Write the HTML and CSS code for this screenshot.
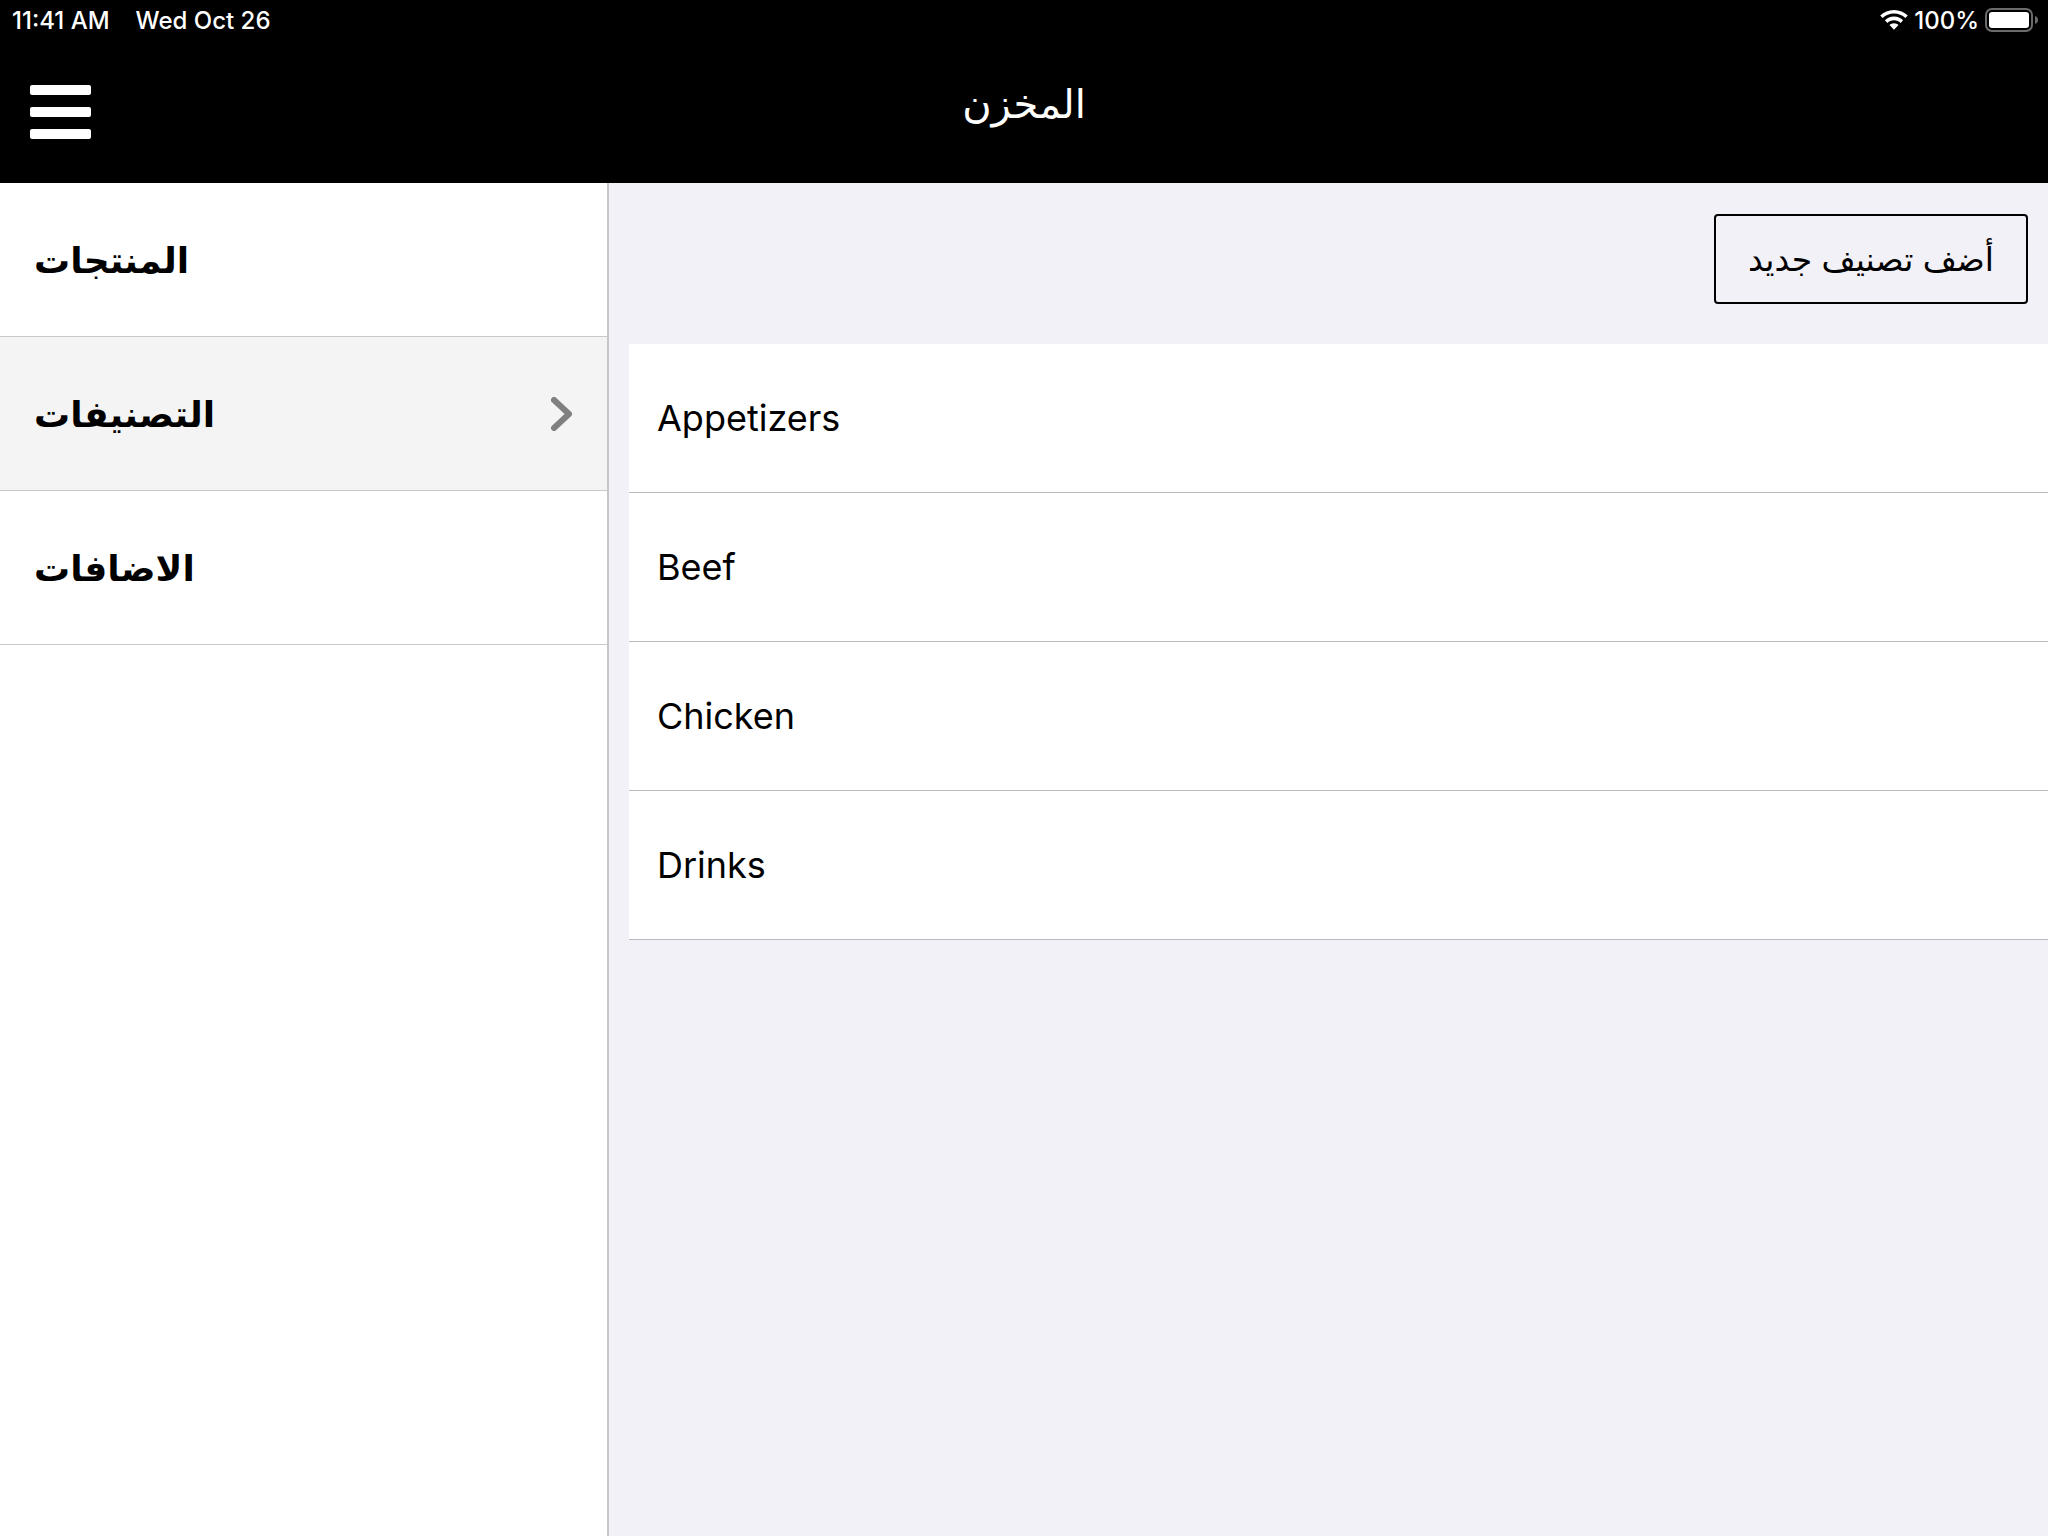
FILE: index.html
```html
<!DOCTYPE html>
<html lang="ar">
<head>
    <meta charset="UTF-8">
    <meta name="viewport" content="width=device-width, initial-scale=1.0">
    <title>المخزن</title>
    <link rel="stylesheet" href="styles.css">
</head>
<body>
    <header class="header">
        <div class="status-bar">
            <div class="status-group status-left">
                <span>11:41 AM</span>
                <span lang="en">Wed Oct 26</span>
            </div>
            <div class="status-group">
                <svg class="wifi" width="28" height="20" viewBox="0 0 28 20" aria-hidden="true">
                    <path d="M14 0C8.600 0 3.700 2.100 0.200 5.500L2.700 8.100C5.600 5.300 9.600 3.600 14 3.600s8.400 1.700 11.300 4.500l2.500-2.600C24.300 2.100 19.400 0 14 0z"/>
                    <path d="M14 6.600c-3.600 0-6.800 1.400-9.100 3.700l2.500 2.600c1.700-1.700 4-2.700 6.600-2.700s4.900 1 6.600 2.700l2.500-2.600C20.800 8 17.600 6.600 14 6.600z"/>
                    <path d="M14 13.200c-1.800 0-3.300 0.700-4.500 1.800L14 19.700l4.500-4.700c-1.200-1.100-2.700-1.800-4.500-1.800z"/>
                </svg>
                <span>100%</span>
                <svg class="battery" width="54" height="24" viewBox="0 0 54 24" aria-hidden="true">
                    <rect x="1" y="1" width="46" height="22" rx="6" fill="none" stroke="#6b6b6b" stroke-width="2"/>
                    <rect x="4" y="4" width="40" height="16" rx="3" fill="#fff"/>
                    <path d="M50 8c2 0.600 3 2.200 3 4s-1 3.400-3 4z" fill="#6b6b6b"/>
                </svg>
            </div>
        </div>
        <div class="nav-bar">
            <button class="menu-button" type="button" aria-label="القائمة">
                <span class="menu-line"></span>
                <span class="menu-line"></span>
                <span class="menu-line"></span>
            </button>
            <h1 class="title">المخزن</h1>
        </div>
    </header>

    <div class="content">
        <nav class="sidebar">
            <a class="sidebar-item" href="#products">المنتجات</a>
            <a class="sidebar-item selected" href="#categories" aria-current="page">
                التصنيفات
                <svg class="chevron" width="22" height="34" viewBox="0 0 22 34" aria-hidden="true">
                    <path d="M3 3L18 17L3 31" fill="none" stroke="#808080" stroke-width="6" stroke-linecap="round" stroke-linejoin="round"/>
                </svg>
            </a>
            <a class="sidebar-item" href="#addons">الاضافات</a>
        </nav>

        <main class="main">
            <div class="toolbar">
                <button class="add-button" type="button" dir="rtl">أضف تصنيف جديد</button>
            </div>
            <ul class="category-list" lang="en">
                <li class="category">Appetizers</li>
                <li class="category">Beef</li>
                <li class="category">Chicken</li>
                <li class="category">Drinks</li>
            </ul>
        </main>
    </div>
</body>
</html>
```

FILE: styles.css
```css
* {
    box-sizing: border-box;
}

body {
    display: flex;
    flex-direction: column;
    min-height: 100vh;
    margin: 0;
    font-family: Inter, "DejaVu Sans", sans-serif;
    color: #000;
    background-color: #f2f1f7;
}

/* Header */
.header {
    background-color: #000;
    color: #fff;
}

.status-bar {
    display: flex;
    justify-content: space-between;
    align-items: center;
    height: 40px;
    padding: 0 9px 0 12px;
    font-size: 24px;
    font-weight: 500;
}

.status-group {
    display: flex;
    align-items: center;
    gap: 6px;
}

.status-left {
    gap: 26px;
}

.wifi {
    fill: #fff;
}

.nav-bar {
    display: grid;
    grid-template-columns: 1fr auto 1fr;
    height: 143px;
    padding: 0 30px;
}

.menu-button {
    display: flex;
    flex-direction: column;
    gap: 12px;
    width: 61px;
    margin-top: 45px;
    padding: 0;
    align-self: start;
    background: none;
    border: none;
    cursor: pointer;
}

.menu-line {
    width: 100%;
    height: 10px;
    border-radius: 2px;
    background-color: #fff;
}

.title {
    margin: 40px 0 0;
    font-size: 40px;
    font-weight: normal;
    line-height: 48px;
}

/* Content */
.content {
    display: flex;
    flex: 1;
}

.sidebar {
    width: 609px;
    flex-shrink: 0;
    background-color: #fff;
    border-right: 2px solid #c6c6c8;
}

.sidebar-item {
    display: flex;
    justify-content: space-between;
    align-items: center;
    height: 154px;
    padding: 0 34px;
    border-bottom: 1px solid #c8c8c8;
    color: #000;
    font-size: 36px;
    font-weight: bold;
    text-decoration: none;
}

.sidebar-item.selected {
    background-color: #f4f4f4;
}

.main {
    flex: 1;
    padding-left: 20px;
}

.toolbar {
    display: flex;
    justify-content: flex-end;
    padding: 31px 20px 40px;
}

.add-button {
    height: 90px;
    padding: 0 32px;
    border: 2px solid #000;
    border-radius: 4px;
    background: none;
    color: #000;
    font-family: inherit;
    font-size: 33px;
    cursor: pointer;
}

.category-list {
    margin: 0;
    padding: 0;
    list-style: none;
}

.category {
    display: flex;
    align-items: center;
    height: 149px;
    padding: 0 28px;
    border-bottom: 1px solid #bbbbbf;
    background-color: #fff;
    font-size: 36px;
}
```
